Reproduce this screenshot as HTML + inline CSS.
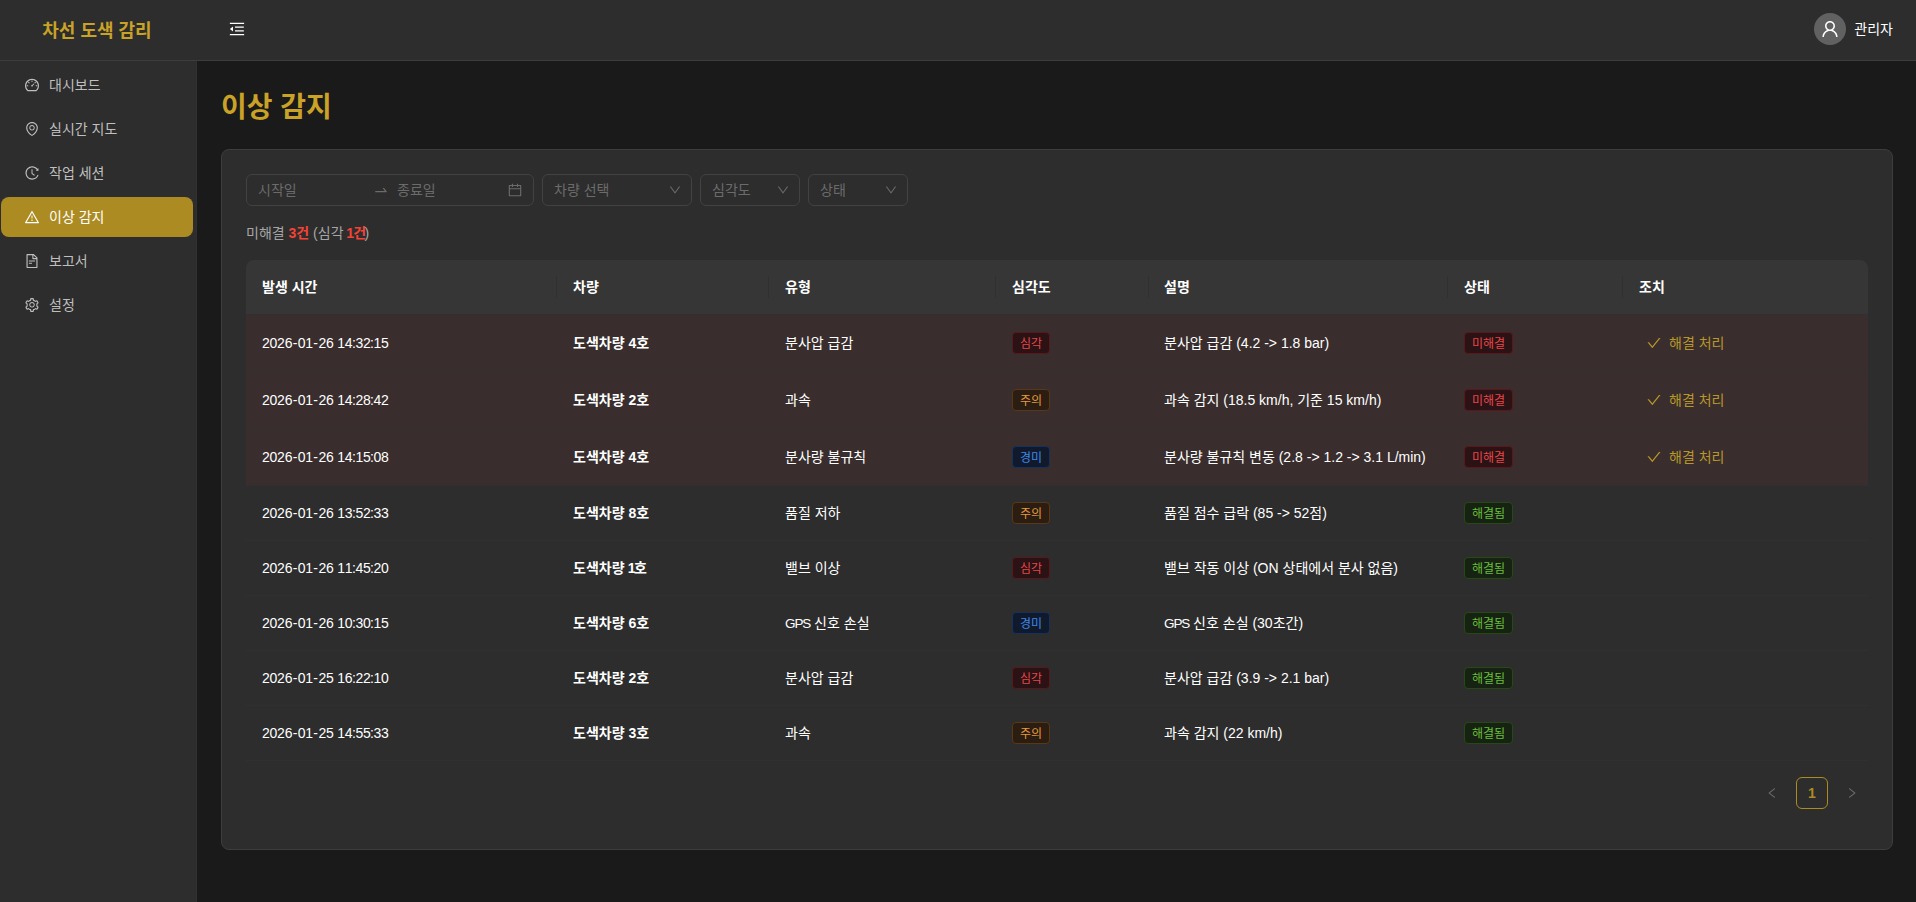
<!DOCTYPE html>
<html lang="ko">
<head>
<meta charset="utf-8">
<title>차선 도색 감리 - 이상 감지</title>
<style>
*{box-sizing:border-box;}
html,body{margin:0;padding:0;}
body{width:1916px;height:902px;overflow:hidden;background:#1a1a1a;font-family:"Liberation Sans","Noto Sans CJK KR",sans-serif;font-size:14px;line-height:22px;color:#fff;}
svg{display:block;fill:currentColor;}
.app{position:absolute;left:-3px;top:-3px;width:1920px;height:906px;background:#1a1a1a;}
.header{position:absolute;left:0;top:0;width:1920px;height:64px;background:#2d2d2d;border-bottom:1px solid #3d3d3d;}
.logo{position:absolute;left:0;top:2px;width:200px;height:64px;line-height:64px;text-align:center;font-size:18px;font-weight:700;color:#c9a227;white-space:nowrap;}
.fold{position:absolute;left:232px;top:24px;width:16px;height:16px;color:#fff;}
.user{position:absolute;right:24px;top:16px;height:32px;display:flex;align-items:center;}
.avatar{width:32px;height:32px;border-radius:50%;background:#616161;display:flex;align-items:center;justify-content:center;color:#fff;}
.uname{margin-left:8px;color:#fff;white-space:nowrap;}
.sider{position:absolute;left:0;top:64px;width:200px;height:842px;background:#2d2d2d;border-right:1px solid #303030;}
.menu{list-style:none;margin:0;padding:0;width:200px;}
.menu li{position:relative;height:40px;line-height:40px;margin:4px;padding-left:24px;border-radius:8px;color:#bfbfbf;white-space:nowrap;display:flex;align-items:center;}
.menu li svg{width:14px;height:14px;flex:none;}
.menu li span{margin-left:10px;}
.menu li.sel{background:#ad8b23;color:#fff;}
.content{position:absolute;left:200px;top:64px;width:1720px;height:842px;padding:24px;}
h2.title{margin:0;position:absolute;left:24px;top:28px;font-size:28px;line-height:38px;font-weight:700;color:#c9a227;white-space:nowrap;}
.card{position:absolute;left:24px;top:88px;width:1672px;height:701px;background:#2d2d2d;border:1px solid #3d3d3d;border-radius:8px;padding:24px;}
.filters{display:flex;height:32px;}
.fbox{position:relative;height:32px;border:1px solid #424242;border-radius:6px;background:#2d2d2d;color:#6b6b6b;margin-right:8px;padding:0 11px;line-height:30px;white-space:nowrap;}
.fbox svg{position:absolute;color:#6b6b6b;}
.summary{margin-top:16px;height:22px;color:#a6a6a6;white-space:nowrap;}
.summary b{color:#f44336;font-weight:700;}
.summary b.n1{margin-left:-1.2px;letter-spacing:-0.7px;}
.summary .rp{margin-left:-0.9px;}
table{border-collapse:separate;border-spacing:0;table-layout:fixed;width:1622px;margin-top:16px;}
th,td{padding:0 16px;text-align:left;white-space:nowrap;overflow:hidden;}
th{height:55px;background:#363636;font-weight:700;color:#fff;border-bottom:1px solid #303030;position:relative;}
th.lsep::before{content:"";position:absolute;left:0;top:16px;width:1px;height:22px;background:#303030;}
th:first-child{border-top-left-radius:8px;}
th:last-child{border-top-right-radius:8px;}
th:not(:last-child)::after{content:"";position:absolute;right:0;top:16px;width:1px;height:22px;background:#303030;}
th.nosep::after{display:none;}
td{height:55px;border-bottom:1px solid #303030;color:#fff;}
tr.un td{height:57px;background:#392e2d;}
td.veh{font-weight:700;}
td.tm{letter-spacing:-0.24px;font-kerning:none;}
td.tm .hy{margin-left:0.47px;letter-spacing:0.47px;}
td.tm .co{margin-left:-0.43px;letter-spacing:-0.43px;}
.cap{font-size:13.5px;letter-spacing:-1.1px;}
.veh .n1{margin-left:-0.8px;letter-spacing:-1.4px;}
.tag{display:inline-block;position:relative;top:-1px;height:22px;line-height:20px;padding:1px 7px 0;font-size:12px;border:1px solid;border-radius:4px;vertical-align:middle;white-space:nowrap;}
.tag.red{color:#e84749;background:#2a1215;border-color:#58181c;}
.tag.org{color:#e89a3c;background:#2b1d11;border-color:#593815;}
.tag.blu{color:#3c89e8;background:#111a2c;border-color:#15325b;}
.tag.grn{color:#6abe39;background:#162312;border-color:#274916;}
.btn{display:inline-flex;align-items:center;height:24px;padding:0 7px;border:1px solid transparent;color:#b8962a;vertical-align:middle;white-space:nowrap;}
.btn svg{width:14px;height:14px;margin-right:8px;}
.pager{position:absolute;right:24px;top:627px;height:32px;display:flex;}
.pager div{width:32px;height:32px;margin-left:8px;display:flex;align-items:center;justify-content:center;color:#6b6b6b;}
.pager div svg{width:12px;height:12px;}
.pager .cur{border:1px solid #ad8b23;border-radius:6px;color:#ad8b23;font-weight:700;}
</style>
</head>
<body>
<div class="app">
  <div class="header">
    <div class="logo">차선 도색 감리</div>
    <div class="fold"><svg viewBox="64 64 896 896" width="16" height="16"><path d="M408 442h480c4.400 0 8-3.600 8-8v-56c0-4.400-3.600-8-8-8H408c-4.400 0-8 3.600-8 8v56c0 4.400 3.600 8 8 8zm-8 204c0 4.400 3.600 8 8 8h480c4.400 0 8-3.600 8-8v-56c0-4.400-3.600-8-8-8H408c-4.400 0-8 3.600-8 8v56zm504-486H120c-4.400 0-8 3.600-8 8v56c0 4.400 3.600 8 8 8h784c4.400 0 8-3.600 8-8v-56c0-4.400-3.600-8-8-8zm0 632H120c-4.400 0-8 3.600-8 8v56c0 4.400 3.600 8 8 8h784c4.400 0 8-3.600 8-8v-56c0-4.400-3.600-8-8-8zM115.400 518.900L271.700 642c5.800 4.600 14.400.5 14.400-6.900V388.900c0-7.400-8.500-11.500-14.400-6.900L115.400 505.100a8.740 8.740 0 0 0 0 13.800z"/></svg></div>
    <div class="user">
      <div class="avatar"><svg viewBox="64 64 896 896" width="18" height="18"><path d="M858.500 763.600a374 374 0 0 0-80.600-119.500 375.630 375.630 0 0 0-119.500-80.600c-.4-.2-.8-.3-1.200-.5C719.500 518 760 444.700 760 362c0-137-111-248-248-248S264 225 264 362c0 82.700 40.500 156 102.800 201.100-.4.200-.8.300-1.200.5-44.800 18.900-85 46-119.500 80.600a375.630 375.630 0 0 0-80.600 119.500A371.700 371.700 0 0 0 136 901.800a8 8 0 0 0 8 8.200h60c4.400 0 7.900-3.500 8-7.800 2-77.200 33-149.500 87.800-204.300 56.700-56.700 132-87.900 212.200-87.900s155.500 31.200 212.200 87.900C779 752.700 810 825 812 902.200c.1 4.400 3.600 7.800 8 7.800h60a8 8 0 0 0 8-8.200c-1-47.800-10.900-94.300-29.500-138.200zM512 534c-45.900 0-89.100-17.900-121.600-50.400S340 407.900 340 362c0-45.900 17.900-89.100 50.400-121.600S466.100 190 512 190s89.100 17.900 121.600 50.400S684 316.100 684 362c0 45.900-17.900 89.100-50.400 121.600S557.900 534 512 534z"/></svg></div>
      <span class="uname">관리자</span>
    </div>
  </div>
  <div class="sider">
    <ul class="menu">
      <li><svg viewBox="64 64 896 896"><path d="M924.800 385.600a446.700 446.700 0 0 0-96-142.400 446.700 446.700 0 0 0-142.400-96C631.100 123.800 572.500 112 512 112s-119.100 11.800-174.400 35.200a446.700 446.700 0 0 0-142.400 96 446.700 446.700 0 0 0-96 142.400C75.800 440.900 64 499.500 64 560c0 132.700 58.300 257.700 159.900 343.100l1.700 1.400c5.800 4.800 13.100 7.500 20.600 7.500h531.700c7.500 0 14.800-2.700 20.600-7.500l1.700-1.400C901.700 817.700 960 692.700 960 560c0-60.500-11.900-119.100-35.200-174.400zM761.400 836H262.600A371.120 371.120 0 0 1 140 560c0-99.400 38.700-192.800 109-263 70.300-70.300 163.700-109 263-109 99.400 0 192.800 38.700 263 109 70.300 70.300 109 163.700 109 263 0 105.600-44.500 205.500-122.600 276zM623.500 421.500a8.030 8.030 0 0 0-11.300 0L527.700 506c-18.700-5-39.400-.2-54.100 14.500a55.950 55.950 0 0 0 0 79.200 55.950 55.950 0 0 0 79.200 0 55.870 55.870 0 0 0 14.500-54.100l84.500-84.500c3.100-3.100 3.100-8.200 0-11.300l-28.300-28.300zM490 320h44c4.400 0 8-3.600 8-8v-80c0-4.400-3.600-8-8-8h-44c-4.400 0-8 3.600-8 8v80c0 4.400 3.600 8 8 8zm260 218v44c0 4.400 3.600 8 8 8h80c4.400 0 8-3.600 8-8v-44c0-4.400-3.600-8-8-8h-80c-4.400 0-8 3.600-8 8zm12.700-197.200l-31.100-31.100a8.030 8.030 0 0 0-11.300 0l-56.600 56.600a8.030 8.030 0 0 0 0 11.300l31.100 31.100c3.100 3.100 8.200 3.100 11.300 0l56.600-56.600c3.100-3.100 3.100-8.200 0-11.300zm-458.600-31.100a8.030 8.030 0 0 0-11.300 0l-31.100 31.100a8.030 8.030 0 0 0 0 11.300l56.600 56.600c3.100 3.100 8.200 3.100 11.300 0l31.100-31.100c3.100-3.100 3.100-8.200 0-11.300l-56.600-56.600zM262 530h-80c-4.400 0-8 3.600-8 8v44c0 4.400 3.600 8 8 8h80c4.400 0 8-3.600 8-8v-44c0-4.400-3.600-8-8-8z"/></svg><span>대시보드</span></li>
      <li><svg viewBox="64 64 896 896"><path d="M854.600 289.100a362.490 362.490 0 0 0-79.900-115.700 370.830 370.830 0 0 0-118.200-77.800C610.700 76.600 562.100 67 512 67c-50.100 0-98.700 9.600-144.500 28.500-44.300 18.300-84 44.500-118.200 77.800A363.600 363.600 0 0 0 169.400 289c-19.500 45-29.400 92.800-29.400 142 0 70.600 16.900 140.900 50.100 208.700 26.700 54.500 64 107.600 111 158.100 80.300 86.200 164.500 138.900 188.400 153a43.900 43.900 0 0 0 22.400 6.100c7.800 0 15.500-2 22.400-6.100 23.900-14.100 108.100-66.800 188.400-153 47-50.400 84.300-103.600 111-158.100C867.100 572 884 501.800 884 431.100c0-49.200-9.900-97-29.400-142zM512 880.200c-65.900-41.900-300-207.800-300-449.100 0-77.900 31.100-151.100 87.600-206.300C356.300 169.500 431.700 139 512 139s155.700 30.500 212.400 85.900C780.900 280 812 353.200 812 431.100c0 241.300-234.100 407.200-300 449.100zm0-617.200c-97.200 0-176 78.800-176 176s78.800 176 176 176 176-78.800 176-176-78.800-176-176-176zm79.200 255.200A111.600 111.600 0 0 1 512 551c-29.900 0-58-11.700-79.200-32.800A111.600 111.600 0 0 1 400 439c0-29.900 11.700-58 32.800-79.200C454 338.600 482.100 327 512 327c29.900 0 58 11.600 79.200 32.800C612.400 381 624 409.100 624 439c0 29.900-11.600 58-32.800 79.200z"/></svg><span>실시간 지도</span></li>
      <li><svg viewBox="64 64 896 896"><path d="M536.100 273H488c-4.400 0-8 3.600-8 8v275.300c0 2.600 1.200 5 3.300 6.500l165.300 120.700c3.600 2.600 8.600 1.900 11.200-1.700l28.600-39c2.700-3.700 1.900-8.700-1.700-11.200L544.100 528.500V281c0-4.400-3.600-8-8-8zm219.800 75.200l156.800 38.300c5 1.200 9.900-2.600 9.900-7.700l.8-161.500c0-6.700-7.700-10.500-12.900-6.300L752.900 334.100a8 8 0 0 0 3 14.100zm167.700 301.100l-56.700-19.500a8 8 0 0 0-10.100 4.800c-1.900 5.100-3.900 10.100-6 15.100-17.800 42.100-43.300 80-75.900 112.500a353 353 0 0 1-112.500 75.900 352.180 352.180 0 0 1-137.700 27.800c-47.800 0-94.100-9.300-137.700-27.800a353 353 0 0 1-112.500-75.900c-32.500-32.500-58-70.400-75.900-112.500A353.440 353.440 0 0 1 171 512c0-47.800 9.300-94.200 27.800-137.800 17.800-42.100 43.300-80 75.900-112.500a353 353 0 0 1 112.500-75.900C430.600 167.300 477 158 524.800 158s94.100 9.300 137.700 27.800A353 353 0 0 1 775 261.700c10.200 10.300 19.800 21 28.600 32.300l59.800-46.800C784.700 146.600 662.200 81.900 524.600 82 285 82.100 92.600 276.700 95 516.400 97.400 751.900 288.900 942 524.800 942c185.500 0 343.500-117.600 403.700-282.300 1.500-4.200-.7-8.900-4.900-10.400z"/></svg><span>작업 세션</span></li>
      <li class="sel"><svg viewBox="64 64 896 896"><path d="M464 720a48 48 0 1 0 96 0 48 48 0 1 0-96 0zm16-304v184c0 4.400 3.600 8 8 8h48c4.400 0 8-3.600 8-8V416c0-4.400-3.600-8-8-8h-48c-4.400 0-8 3.600-8 8zm475.700 440l-416-720c-6.200-10.700-16.900-16-27.700-16s-21.600 5.300-27.700 16l-416 720C56 877.400 71.400 904 96 904h832c24.600 0 40-26.600 27.700-48zm-783.500-27.900L512 239.900l339.800 588.200H172.200z"/></svg><span>이상 감지</span></li>
      <li><svg viewBox="64 64 896 896"><path d="M854.600 288.600L639.400 73.400c-6-6-14.100-9.400-22.600-9.400H192c-17.700 0-32 14.300-32 32v832c0 17.700 14.300 32 32 32h640c17.700 0 32-14.300 32-32V311.300c0-8.500-3.400-16.700-9.400-22.700zM790.200 326H602V137.800L790.200 326zm1.800 562H232V136h302v216a42 42 0 0 0 42 42h216v494zM504 618H320c-4.400 0-8 3.600-8 8v48c0 4.400 3.600 8 8 8h184c4.400 0 8-3.600 8-8v-48c0-4.400-3.600-8-8-8zM312 490v48c0 4.400 3.600 8 8 8h384c4.400 0 8-3.600 8-8v-48c0-4.400-3.600-8-8-8H320c-4.400 0-8 3.600-8 8z"/></svg><span>보고서</span></li>
      <li><svg viewBox="64 64 896 896"><path d="M924.800 625.700l-65.500-56c3.100-19 4.700-38.400 4.700-57.800s-1.600-38.800-4.700-57.800l65.500-56a32.030 32.030 0 0 0 9.300-35.200l-.9-2.600a442.090 442.090 0 0 0-79.700-137.900l-1.800-2.100a32.120 32.120 0 0 0-35.100-9.500l-81.300 28.900c-30-24.600-63.500-44-99.700-57.600l-15.700-85a32.050 32.050 0 0 0-25.800-25.700l-2.700-.5c-52.100-9.400-106.900-9.400-159 0l-2.700.5a32.050 32.050 0 0 0-25.800 25.700l-15.800 85.400a351.860 351.860 0 0 0-99 57.400l-81.900-29.100a32 32 0 0 0-35.100 9.500l-1.800 2.100a446.020 446.020 0 0 0-79.700 137.900l-.9 2.600c-4.500 12.500-.8 26.500 9.300 35.200l66.300 56.600c-3.100 18.800-4.600 38-4.600 57.100 0 19.200 1.500 38.400 4.600 57.100L99 625.500a32.030 32.030 0 0 0-9.300 35.200l.9 2.600c18.100 50.400 44.900 96.900 79.700 137.900l1.800 2.100a32.120 32.120 0 0 0 35.100 9.500l81.900-29.100c29.800 24.500 63.100 43.900 99 57.400l15.800 85.400a32.050 32.050 0 0 0 25.800 25.700l2.700.5a449.400 449.400 0 0 0 159 0l2.700-.5a32.050 32.050 0 0 0 25.800-25.700l15.700-85a350 350 0 0 0 99.700-57.600l81.300 28.900a32 32 0 0 0 35.100-9.500l1.800-2.100c34.800-41.100 61.600-87.500 79.700-137.900l.9-2.600c4.500-12.300.8-26.300-9.300-35zM788.300 465.900c2.500 15.100 3.800 30.600 3.800 46.100s-1.300 31-3.800 46.100l-6.600 40.100 74.700 63.900a370.030 370.030 0 0 1-42.600 73.600L721 702.800l-31.400 25.800c-23.900 19.600-50.500 35-79.300 45.800l-38.100 14.300-17.900 97a377.500 377.500 0 0 1-85 0l-17.900-97.200-37.800-14.500c-28.500-10.800-55-26.200-78.700-45.700l-31.400-25.900-93.400 33.200c-17-22.900-31.200-47.600-42.600-73.600l75.500-64.500-6.500-40c-2.400-14.900-3.700-30.300-3.700-45.500 0-15.300 1.200-30.600 3.700-45.500l6.500-40-75.500-64.500c11.300-26.100 25.600-50.700 42.600-73.600l93.400 33.200 31.400-25.900c23.700-19.500 50.200-34.900 78.700-45.700l37.900-14.300 17.900-97.200c28.100-3.200 56.800-3.200 85 0l17.900 97 38.100 14.300c28.700 10.800 55.400 26.200 79.300 45.800l31.400 25.800 92.800-32.900c17 22.900 31.200 47.600 42.600 73.600L781.800 426l6.500 39.900zM512 326c-97.200 0-176 78.800-176 176s78.800 176 176 176 176-78.800 176-176-78.800-176-176-176zm79.200 255.200A111.600 111.600 0 0 1 512 614c-29.900 0-58-11.700-79.200-32.800A111.600 111.600 0 0 1 400 502c0-29.900 11.700-58 32.800-79.200C454 401.600 482.100 390 512 390c29.900 0 58 11.600 79.200 32.800A111.600 111.600 0 0 1 624 502c0 29.900-11.700 58-32.800 79.200z"/></svg><span>설정</span></li>
    </ul>
  </div>
  <div class="content">
    <h2 class="title">이상 감지</h2>
    <div class="card">
      <div class="filters">
        <div class="fbox range" style="width:288px"><span class="ph" style="position:absolute;left:11px">시작일</span><svg viewBox="0 0 1024 1024" width="16" height="16" style="left:126px;top:7px"><path d="M873.100 596.200l-164-208A32 32 0 0 0 684 376h-64.800c-6.700 0-10.400 7.700-6.300 13l144.300 183H152c-4.400 0-8 3.600-8 8v60c0 4.400 3.600 8 8 8h695.900c26.800 0 41.700-30.800 25.200-51.800z"/></svg><span class="ph" style="position:absolute;left:150px">종료일</span><svg viewBox="64 64 896 896" width="14" height="14" style="right:11px;top:8px"><path d="M880 184H712v-64c0-4.400-3.600-8-8-8h-56c-4.400 0-8 3.600-8 8v64H384v-64c0-4.400-3.600-8-8-8h-56c-4.400 0-8 3.600-8 8v64H144c-17.700 0-32 14.300-32 32v664c0 17.700 14.300 32 32 32h736c17.700 0 32-14.300 32-32V216c0-17.700-14.300-32-32-32zm-40 656H184V460h656v380zM184 392V256h128v48c0 4.400 3.600 8 8 8h56c4.400 0 8-3.600 8-8v-48h256v48c0 4.400 3.600 8 8 8h56c4.400 0 8-3.600 8-8v-48h128v136H184z"/></svg></div>
        <div class="fbox" style="width:150px"><span class="ph">차량 선택</span><svg viewBox="64 64 896 896" width="12" height="12" style="right:10px;top:9px"><path d="M884 256h-75c-5.100 0-9.900 2.500-12.900 6.600L512 654.200 227.900 262.600c-3-4.100-7.800-6.600-12.900-6.600h-75c-6.500 0-10.300 7.400-6.500 12.700l352.600 486.100c12.800 17.600 39 17.600 51.700 0l352.600-486.100c3.900-5.300.1-12.700-6.400-12.700z"/></svg></div>
        <div class="fbox" style="width:100px"><span class="ph">심각도</span><svg viewBox="64 64 896 896" width="12" height="12" style="right:10px;top:9px"><path d="M884 256h-75c-5.100 0-9.900 2.500-12.900 6.600L512 654.200 227.900 262.600c-3-4.100-7.800-6.600-12.900-6.600h-75c-6.500 0-10.300 7.400-6.500 12.700l352.600 486.100c12.800 17.600 39 17.600 51.700 0l352.600-486.100c3.900-5.300.1-12.700-6.400-12.700z"/></svg></div>
        <div class="fbox" style="width:100px;margin-right:0"><span class="ph">상태</span><svg viewBox="64 64 896 896" width="12" height="12" style="right:10px;top:9px"><path d="M884 256h-75c-5.100 0-9.900 2.500-12.900 6.600L512 654.200 227.900 262.600c-3-4.100-7.800-6.600-12.900-6.600h-75c-6.500 0-10.300 7.400-6.500 12.700l352.600 486.100c12.800 17.600 39 17.600 51.700 0l352.600-486.100c3.900-5.300.1-12.700-6.400-12.700z"/></svg></div>
      </div>
      <div class="summary">미해결 <b>3건</b> (심각 <b class="n1">1건</b><span class="rp">)</span></div>
      <table>
        <colgroup><col style="width:311px"><col style="width:212px"><col style="width:227px"><col style="width:152px"><col style="width:300px"><col style="width:175px"><col style="width:245px"></colgroup>
        <thead><tr><th>발생 시간</th><th>차량</th><th>유형</th><th class="nosep">심각도</th><th class="lsep">설명</th><th>상태</th><th>조치</th></tr></thead>
        <tbody>
          <tr class="un"><td class="tm">2026<span class="hy">-</span>01<span class="hy">-</span>26 14<span class="co">:</span>32<span class="co">:</span>15</td><td class="veh">도색차량 4호</td><td>분사압 급감</td><td><span class="tag red">심각</span></td><td class="desc">분사압 급감 (4.2 -&gt; 1.8 bar)</td><td><span class="tag red">미해결</span></td><td><span class="btn"><svg viewBox="64 64 896 896"><path d="M912 190h-69.900c-9.800 0-19.100 4.500-25.100 12.200L404.700 724.500 207 474a32 32 0 0 0-25.100-12.200H112c-6.700 0-10.400 7.700-6.300 12.900l273.900 347c12.800 16.200 37.400 16.200 50.300 0l488.400-618.900c4.100-5.100.4-12.800-6.300-12.800z"/></svg><span>해결 처리</span></span></td></tr>
          <tr class="un"><td class="tm">2026<span class="hy">-</span>01<span class="hy">-</span>26 14<span class="co">:</span>28<span class="co">:</span>42</td><td class="veh">도색차량 2호</td><td>과속</td><td><span class="tag org">주의</span></td><td class="desc">과속 감지 (18.5 km/h, 기준 15 km/h)</td><td><span class="tag red">미해결</span></td><td><span class="btn"><svg viewBox="64 64 896 896"><path d="M912 190h-69.900c-9.800 0-19.100 4.500-25.100 12.200L404.700 724.500 207 474a32 32 0 0 0-25.100-12.200H112c-6.700 0-10.400 7.700-6.300 12.900l273.900 347c12.800 16.200 37.400 16.200 50.300 0l488.400-618.900c4.100-5.100.4-12.800-6.300-12.800z"/></svg><span>해결 처리</span></span></td></tr>
          <tr class="un"><td class="tm">2026<span class="hy">-</span>01<span class="hy">-</span>26 14<span class="co">:</span>15<span class="co">:</span>08</td><td class="veh">도색차량 4호</td><td>분사량 불규칙</td><td><span class="tag blu">경미</span></td><td class="desc">분사량 불규칙 변동 (2.8 -&gt; 1.2 -&gt; 3.1 L/min)</td><td><span class="tag red">미해결</span></td><td><span class="btn"><svg viewBox="64 64 896 896"><path d="M912 190h-69.900c-9.800 0-19.100 4.500-25.100 12.200L404.700 724.500 207 474a32 32 0 0 0-25.100-12.200H112c-6.700 0-10.400 7.700-6.300 12.900l273.900 347c12.800 16.200 37.400 16.200 50.300 0l488.400-618.900c4.100-5.100.4-12.800-6.300-12.800z"/></svg><span>해결 처리</span></span></td></tr>
          <tr><td class="tm">2026<span class="hy">-</span>01<span class="hy">-</span>26 13<span class="co">:</span>52<span class="co">:</span>33</td><td class="veh">도색차량 8호</td><td>품질 저하</td><td><span class="tag org">주의</span></td><td class="desc">품질 점수 급락 (85 -&gt; 52점)</td><td><span class="tag grn">해결됨</span></td><td></td></tr>
          <tr><td class="tm">2026<span class="hy">-</span>01<span class="hy">-</span>26 11<span class="co">:</span>45<span class="co">:</span>20</td><td class="veh">도색차량 <span class="n1">1</span>호</td><td>밸브 이상</td><td><span class="tag red">심각</span></td><td class="desc">밸브 작동 이상 (ON 상태에서 분사 없음)</td><td><span class="tag grn">해결됨</span></td><td></td></tr>
          <tr><td class="tm">2026<span class="hy">-</span>01<span class="hy">-</span>26 10<span class="co">:</span>30<span class="co">:</span>15</td><td class="veh">도색차량 6호</td><td><span class="cap">GPS</span> 신호 손실</td><td><span class="tag blu">경미</span></td><td class="desc"><span class="cap">GPS</span> 신호 손실 (30초간)</td><td><span class="tag grn">해결됨</span></td><td></td></tr>
          <tr><td class="tm">2026<span class="hy">-</span>01<span class="hy">-</span>25 16<span class="co">:</span>22<span class="co">:</span>10</td><td class="veh">도색차량 2호</td><td>분사압 급감</td><td><span class="tag red">심각</span></td><td class="desc">분사압 급감 (3.9 -&gt; 2.1 bar)</td><td><span class="tag grn">해결됨</span></td><td></td></tr>
          <tr><td class="tm">2026<span class="hy">-</span>01<span class="hy">-</span>25 14<span class="co">:</span>55<span class="co">:</span>33</td><td class="veh">도색차량 3호</td><td>과속</td><td><span class="tag org">주의</span></td><td class="desc">과속 감지 (22 km/h)</td><td><span class="tag grn">해결됨</span></td><td></td></tr>
        </tbody>
      </table>
      <div class="pager"><div class="prev"><svg viewBox="64 64 896 896"><path d="M724 218.300V141c0-6.700-7.700-10.400-12.900-6.300L260.300 486.800a31.860 31.860 0 0 0 0 50.300l450.800 352.100c5.300 4.100 12.900.4 12.900-6.300v-77.300c0-4.900-2.300-9.600-6.100-12.600l-360-281 360-281.100c3.800-3 6.100-7.700 6.100-12.600z"/></svg></div><div class="cur">1</div><div class="next"><svg viewBox="64 64 896 896"><path d="M765.700 486.800L314.900 134.700A7.970 7.970 0 0 0 302 141v77.300c0 4.900 2.300 9.600 6.100 12.600l360 281.100-360 281.100c-3.900 3-6.100 7.700-6.100 12.600V883c0 6.700 7.700 10.400 12.900 6.300l450.800-352.100a31.960 31.960 0 0 0 0-50.400z"/></svg></div></div>
    </div>
  </div>
</div>
</body>
</html>
